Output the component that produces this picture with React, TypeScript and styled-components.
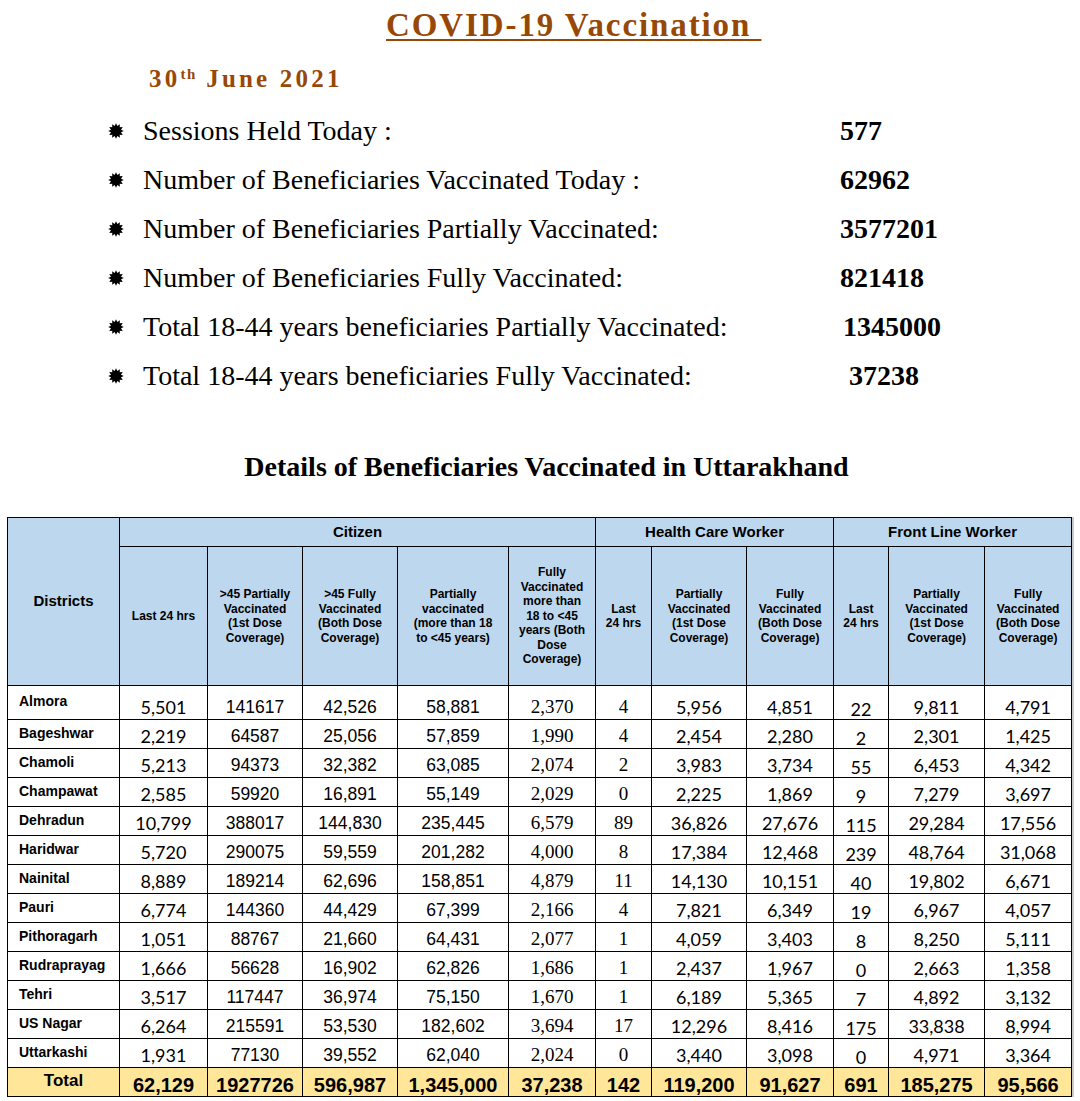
import styled, { createGlobalStyle } from 'styled-components'

const brown = '#974806'
const headBlue = '#BDD7EE'
const totalGold = '#FFE699'

const GlobalStyle = createGlobalStyle`
	html, body {
		margin: 0;
		padding: 0;
		background: #fff;
	}
	body {
		width: 1080px;
		height: 1101px;
		overflow: hidden;
	}
`

const Page = styled.main`
	width: 1080px;
	display: flex;
	flex-direction: column;
`

const Title = styled.h1`
	margin: 0;
	padding: 5px 0 0 386px;
	height: 41px;
	box-sizing: border-box;
	line-height: 40px;
	font-family: 'Liberation Serif', serif;
	font-size: 33px;
	font-weight: 700;
	letter-spacing: 1.9px;
	color: ${brown};
	text-decoration: underline;
	text-decoration-thickness: 2px;
	text-underline-offset: 3px;
	white-space: pre;
`

const DateLine = styled.div`
	margin-top: 23px;
	padding-left: 149px;
	line-height: 30px;
	font-family: 'Liberation Serif', serif;
	font-size: 25px;
	font-weight: 700;
	letter-spacing: 3.2px;
	color: ${brown};
	sup {
		font-size: 15px;
		letter-spacing: 1.5px;
		vertical-align: 8px;
		line-height: 0;
	}
`

const StatList = styled.ul`
	list-style: none;
	margin: 12px 0 0;
	padding: 0 0 0 108px;
	display: grid;
	grid-template-columns: 35px 697px auto;
	grid-auto-rows: 49px;
	align-items: center;
	font-family: 'Liberation Serif', serif;
	font-size: 28px;
	color: #000;
`

const StatRow = styled.li`
	display: contents;
`

const Bullet = styled.svg`
	width: 16px;
	height: 16px;
	display: block;
`

const StatLabel = styled.span`
	white-space: nowrap;
`

const StatValue = styled.span<{ $nudge: number }>`
	font-weight: 700;
	padding-left: ${(p) => p.$nudge}px;
`

const SubTitle = styled.h2`
	margin: 50px 0 0;
	padding-left: 13px;
	line-height: 34px;
	text-align: center;
	font-family: 'Liberation Serif', serif;
	font-size: 28px;
	font-weight: 700;
	color: #000;
`

const Table = styled.table`
	margin: 33px 0 0 7px;
	width: 1064px;
	table-layout: fixed;
	border-collapse: collapse;
	box-shadow: 2px 0 0 #c9c9c9;
	td,
	th {
		border: 1px solid #000;
		padding: 0;
	}
`

const HeadCell = styled.th<{ $size?: number }>`
	background: ${headBlue};
	font-family: 'Liberation Sans', Arial, sans-serif;
	font-size: ${(p) => p.$size ?? 12}px;
	line-height: 14.5px;
	font-weight: 700;
	color: #000;
	text-align: center;
	vertical-align: middle;
`

const HeadRow = styled.tr<{ $h: number }>`
	height: ${(p) => p.$h}px;
`

const DataRow = styled.tr<{ $h: number }>`
	height: ${(p) => p.$h}px;
`

const DistrictCell = styled.td`
	font-family: 'Liberation Sans', Arial, sans-serif;
	font-size: 14px;
	font-weight: 700;
	text-align: left;
	vertical-align: middle;
	padding-left: 11px !important;
	padding-bottom: 3px !important;
	white-space: nowrap;
`

type Face = 'arial' | 'times' | 'calibri'

const faces: Record<Face, { family: string; size: number }> = {
	arial: { family: "'Liberation Sans', Arial, sans-serif", size: 17.5 },
	times: { family: "'Liberation Serif', 'Times New Roman', serif", size: 19 },
	calibri: { family: "Lato, 'Open Sans', sans-serif", size: 18 },
}

const NumCell = styled.td<{ $face: Face; $low?: boolean }>`
	font-family: ${(p) => faces[p.$face].family};
	font-size: ${(p) => faces[p.$face].size}px;
	line-height: 20px;
	text-align: center;
	vertical-align: bottom;
	padding-bottom: ${(p) => (p.$low ? 0 : 2)}px !important;
	color: #000;
`

const TotalRow = styled.tr`
	height: 29px;
	background: ${totalGold};
`

const TotalLabel = styled.td`
	font-family: 'Liberation Sans', Arial, sans-serif;
	font-size: 17px;
	font-weight: 700;
	text-align: center;
	vertical-align: middle;
	padding-bottom: 3px !important;
`

const TotalCell = styled.td`
	font-family: 'Liberation Sans', Arial, sans-serif;
	font-size: 20px;
	font-weight: 700;
	line-height: 22px;
	text-align: center;
	vertical-align: bottom;
`

const colWidths = [112, 88, 95, 95, 111, 87, 56, 95, 87, 55, 96, 87]

const colFaces: Face[] = [
	'calibri',
	'arial',
	'arial',
	'arial',
	'times',
	'times',
	'calibri',
	'calibri',
	'calibri',
	'calibri',
	'calibri',
]

const subHeads: string[][] = [
	['Last 24 hrs'],
	['>45 Partially', 'Vaccinated', '(1st Dose', 'Coverage)'],
	['>45 Fully', 'Vaccinated', '(Both Dose', 'Coverage)'],
	['Partially', 'vaccinated', '(more than 18', 'to <45 years)'],
	['Fully', 'Vaccinated', 'more than', '18 to <45', 'years (Both', 'Dose', 'Coverage)'],
	['Last', '24 hrs'],
	['Partially', 'Vaccinated', '(1st Dose', 'Coverage)'],
	['Fully', 'Vaccinated', '(Both Dose', 'Coverage)'],
	['Last', '24 hrs'],
	['Partially', 'Vaccinated', '(1st Dose', 'Coverage)'],
	['Fully', 'Vaccinated', '(Both Dose', 'Coverage)'],
]

const stats = [
	{ label: 'Sessions Held Today :', value: '577', nudge: 0 },
	{ label: 'Number of Beneficiaries Vaccinated Today :', value: '62962', nudge: 0 },
	{ label: 'Number of Beneficiaries Partially Vaccinated:', value: '3577201', nudge: 0 },
	{ label: 'Number of Beneficiaries Fully Vaccinated:', value: '821418', nudge: 0 },
	{ label: 'Total 18-44 years beneficiaries Partially Vaccinated:', value: '1345000', nudge: 3 },
	{ label: 'Total 18-44 years beneficiaries Fully Vaccinated:', value: '37238', nudge: 9 },
]

const rows: string[][] = [
	['Almora', '5,501', '141617', '42,526', '58,881', '2,370', '4', '5,956', '4,851', '22', '9,811', '4,791'],
	['Bageshwar', '2,219', '64587', '25,056', '57,859', '1,990', '4', '2,454', '2,280', '2', '2,301', '1,425'],
	['Chamoli', '5,213', '94373', '32,382', '63,085', '2,074', '2', '3,983', '3,734', '55', '6,453', '4,342'],
	['Champawat', '2,585', '59920', '16,891', '55,149', '2,029', '0', '2,225', '1,869', '9', '7,279', '3,697'],
	['Dehradun', '10,799', '388017', '144,830', '235,445', '6,579', '89', '36,826', '27,676', '115', '29,284', '17,556'],
	['Haridwar', '5,720', '290075', '59,559', '201,282', '4,000', '8', '17,384', '12,468', '239', '48,764', '31,068'],
	['Nainital', '8,889', '189214', '62,696', '158,851', '4,879', '11', '14,130', '10,151', '40', '19,802', '6,671'],
	['Pauri', '6,774', '144360', '44,429', '67,399', '2,166', '4', '7,821', '6,349', '19', '6,967', '4,057'],
	['Pithoragarh', '1,051', '88767', '21,660', '64,431', '2,077', '1', '4,059', '3,403', '8', '8,250', '5,111'],
	['Rudraprayag', '1,666', '56628', '16,902', '62,826', '1,686', '1', '2,437', '1,967', '0', '2,663', '1,358'],
	['Tehri', '3,517', '117447', '36,974', '75,150', '1,670', '1', '6,189', '5,365', '7', '4,892', '3,132'],
	['US Nagar', '6,264', '215591', '53,530', '182,602', '3,694', '17', '12,296', '8,416', '175', '33,838', '8,994'],
	['Uttarkashi', '1,931', '77130', '39,552', '62,040', '2,024', '0', '3,440', '3,098', '0', '4,971', '3,364'],
]

const totals = ['62,129', '1927726', '596,987', '1,345,000', '37,238', '142', '119,200', '91,627', '691', '185,275', '95,566']

// 12-point starburst used as the list bullet
const starPoints = Array.from({ length: 24 }, (_, i) => {
	const r = i % 2 === 0 ? 7.8 : 5.2
	const a = (Math.PI * i) / 12 - Math.PI / 2
	return `${(8 + r * Math.cos(a)).toFixed(2)},${(8 + r * Math.sin(a)).toFixed(2)}`
}).join(' ')

const Star = () => (
	<Bullet viewBox='0 0 16 16'>
		<polygon points={starPoints} fill='#000' />
	</Bullet>
)

const App = (): JSX.Element => {
	return (
		<Page>
			<GlobalStyle />
			<Title>{'COVID-19 Vaccination\u00a0'}</Title>
			<DateLine>
				30<sup>th</sup> June 2021
			</DateLine>
			<StatList>
				{stats.map((s) => (
					<StatRow key={s.label}>
						<Star />
						<StatLabel>{s.label}</StatLabel>
						<StatValue $nudge={s.nudge}>{s.value}</StatValue>
					</StatRow>
				))}
			</StatList>
			<SubTitle>Details of Beneficiaries Vaccinated in Uttarakhand</SubTitle>
			<Table>
				<colgroup>
					{colWidths.map((w, i) => (
						<col key={i} style={{ width: w }} />
					))}
				</colgroup>
				<thead>
					<HeadRow $h={29}>
						<HeadCell rowSpan={2} $size={15}>
							Districts
						</HeadCell>
						<HeadCell colSpan={5} $size={15}>
							Citizen
						</HeadCell>
						<HeadCell colSpan={3} $size={15}>
							Health Care Worker
						</HeadCell>
						<HeadCell colSpan={3} $size={15}>
							Front Line Worker
						</HeadCell>
					</HeadRow>
					<HeadRow $h={139}>
						{subHeads.map((lines, i) => (
							<HeadCell key={i}>
								{lines.map((l, j) => (
									<div key={j}>{l}</div>
								))}
							</HeadCell>
						))}
					</HeadRow>
				</thead>
				<tbody>
					{rows.map((r, ri) => (
						<DataRow key={r[0]} $h={ri === 0 ? 34 : 29}>
							<DistrictCell>{r[0]}</DistrictCell>
							{r.slice(1).map((v, ci) => (
								<NumCell key={ci} $face={colFaces[ci]} $low={ci === 8}>
									{v}
								</NumCell>
							))}
						</DataRow>
					))}
					<TotalRow>
						<TotalLabel>Total</TotalLabel>
						{totals.map((v, i) => (
							<TotalCell key={i}>{v}</TotalCell>
						))}
					</TotalRow>
				</tbody>
			</Table>
		</Page>
	)
}

export default App
